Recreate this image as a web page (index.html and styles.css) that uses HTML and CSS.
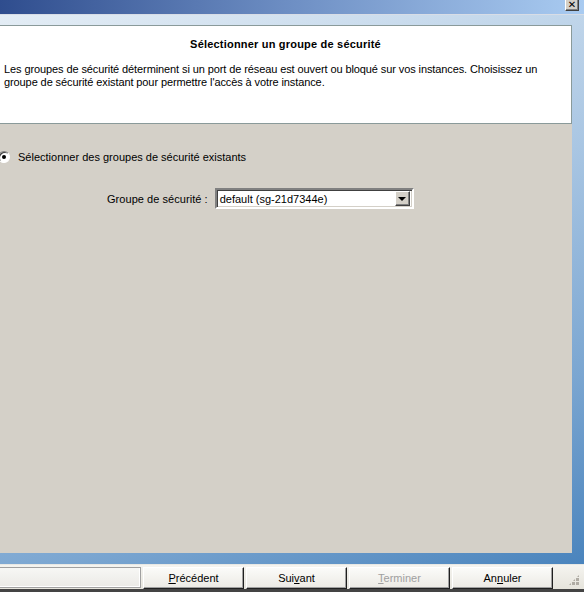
FILE: index.html
```html
<!DOCTYPE html>
<html lang="fr">
<head>
    <meta charset="UTF-8">
    <title>Assistant de lancement</title>
    <link rel="stylesheet" href="styles.css">
</head>
<body>
    <!-- Title bar (window is cut at the top) -->
    <div class="titlebar">
        <span class="close-button">&#x2715;</span>
    </div>

    <div class="frame">
        <div class="header">
            <h1>Sélectionner un groupe de sécurité</h1>
            <p>Les groupes de sécurité déterminent si un port de réseau est ouvert ou bloqué sur vos instances. Choisissez un<br>groupe de sécurité existant pour permettre l'accès à votre instance.</p>
        </div>

        <div class="content">
            <label class="radio-row">
                <span class="radio"><span class="radio-dot"></span></span>
                Sélectionner des groupes de sécurité existants
            </label>

            <div class="field-row">
                <span class="field-label">Groupe de sécurité :</span>
                <div class="combo">
                    <span class="combo-text">default (sg-21d7344e)</span>
                    <span class="combo-button"><span class="combo-arrow"></span></span>
                </div>
            </div>
        </div>
    </div>

    <div class="footer">
        <div class="status-panel"></div>
        <button class="wizard-button"><u>P</u>récédent</button>
        <button class="wizard-button">Sui<u>v</u>ant</button>
        <button class="wizard-button disabled"><u>T</u>erminer</button>
        <button class="wizard-button">An<u>n</u>uler</button>
        <div class="grip"></div>
    </div>
</body>
</html>
```

FILE: styles.css
```css
body {
    margin: 0;
    width: 584px;
    height: 592px;
    overflow: hidden;
    font-family: 'Liberation Sans', Arial, sans-serif;
    font-size: 11px;
    color: #000;
    background: #d4d0c8;
}

/* Title bar */
.titlebar {
    height: 14px;
    border-bottom: 1px solid #d8dde6;
    background: linear-gradient(to right, #2f4d8e, #6e8fc4 50%, #a9cbf1);
    display: flex;
    justify-content: flex-end;
    align-items: flex-start;
    padding-right: 5px;
}

.close-button {
    width: 12px;
    height: 10px;
    background: #d4d0c8;
    border-right: 1px solid #404040;
    border-bottom: 1px solid #404040;
    border-left: 1px solid #fff;
    box-shadow: inset -1px -1px 0 #808080;
    font-size: 10px;
    line-height: 10px;
    text-align: center;
    font-weight: bold;
    font-family: 'DejaVu Sans', sans-serif;
}

/* Wizard frame with the blue gradient */
.frame {
    height: 528px;
    padding: 10px 12px 11px 0;
    background: linear-gradient(160deg, #e4edf5 0%, #a9c6e3 45%, #7ba6d1 75%, #4a84bd 100%);
    display: flex;
    flex-direction: column;
}

.header {
    background: #fff;
    border-top: 1px solid #8a9a9a;
    border-right: 1px solid #8a9a9a;
    border-bottom: 1px solid #8a9a9a;
    height: 97px;
    padding: 0 4px;
}

.header h1 {
    margin: 12px 0 0;
    font-size: 11px;
    font-weight: bold;
    text-align: center;
    line-height: 13px;
    letter-spacing: 0.2px;
}

.header p {
    margin: 12px 0 0;
    line-height: 13px;
    letter-spacing: -0.1px;
}

.content {
    flex: 1;
    background: #d4d0c8;
    padding-top: 26px;
}

.radio-row {
    display: flex;
    align-items: center;
    gap: 8px;
    height: 13px;
    margin-left: -2px;
}

.radio {
    width: 10px;
    height: 10px;
    border-radius: 50%;
    background: #fff;
    border: 1px solid #808080;
    border-right-color: #fff;
    border-bottom-color: #fff;
    box-shadow: inset 1px 1px 0 #404040;
    display: flex;
    align-items: center;
    justify-content: center;
}

.radio-dot {
    width: 4px;
    height: 4px;
    border-radius: 50%;
    background: #000;
}

.field-row {
    display: flex;
    align-items: center;
    margin-top: 25px;
    padding-left: 107px;
    gap: 7px;
}

.field-label {
    letter-spacing: 0.05px;
}

.combo {
    width: 195px;
    height: 17px;
    background: #fff;
    border: 2px solid;
    border-color: #808080 #fff #fff #808080;
    box-shadow: inset 1px 1px 0 #404040, inset -1px -1px 0 #d4d0c8;
    display: flex;
    align-items: center;
    justify-content: space-between;
}

.combo-text {
    padding-left: 3px;
}

.combo-button {
    width: 13px;
    height: 13px;
    margin-right: 2px;
    background: #d4d0c8;
    border: 1px solid;
    border-color: #fff #404040 #404040 #fff;
    box-shadow: inset -1px -1px 0 #808080;
    display: flex;
    align-items: center;
    justify-content: center;
}

.combo-arrow {
    width: 0;
    height: 0;
    border-left: 4px solid transparent;
    border-right: 4px solid transparent;
    border-top: 4px solid #000;
}

/* Bottom buttons */
.footer {
    height: 22px;
    padding-top: 2px;
    border-top: 1px solid #e8e8e4;
    border-bottom: 3px solid #444;
    background: linear-gradient(#f5f4f0, #e6e4dc);
    display: flex;
    align-items: flex-start;
}

.status-panel {
    width: 141px;
    height: 19px;
    margin-left: -2px;
    border: 1px solid #a0a0a0;
    background: linear-gradient(#f7f7f5, #ebeae6);
    box-shadow: inset -1px -1px 0 #fff;
}

.wizard-button {
    width: 101px;
    height: 22px;
    margin-left: 2px;
    padding: 0;
    font-family: 'Liberation Sans', Arial, sans-serif;
    font-size: 11px;
    color: #000;
    background: linear-gradient(#fbfbf9, #eceae4);
    border: 1px solid;
    border-color: #fff #202020 #202020 #fff;
    box-shadow: inset -1px -1px 0 #a0a0a0;
}

.wizard-button.disabled {
    color: #a0a0a0;
}

.grip {
    width: 12px;
    height: 12px;
    margin: 7px 4px 0 auto;
    background:
        radial-gradient(circle at 1.5px 1.5px, #b0aca4 1.5px, transparent 1.6px) 0 0 / 4px 4px;
    clip-path: polygon(100% 0, 100% 100%, 0 100%);
}
```
